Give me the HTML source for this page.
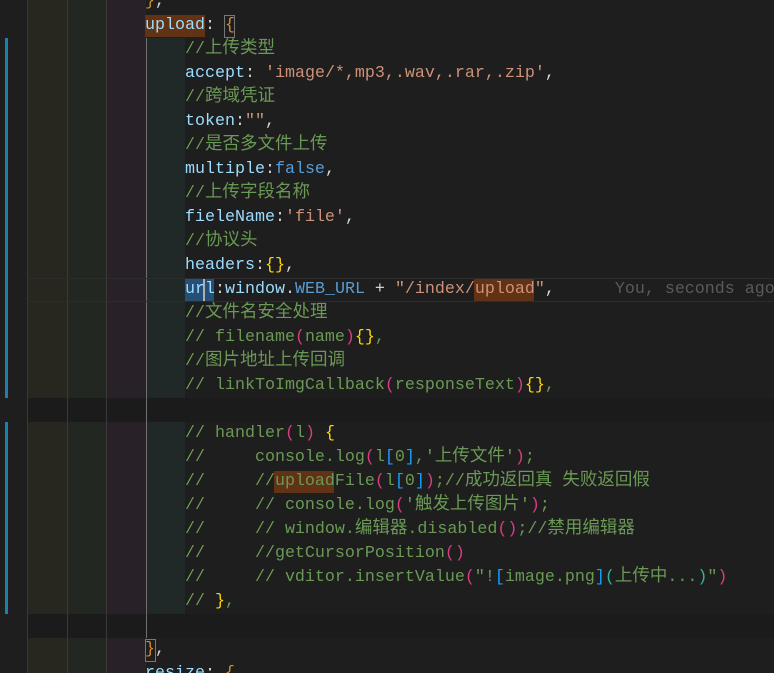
<!DOCTYPE html>
<html><head><meta charset="utf-8"><style>
html,body{margin:0;padding:0;width:774px;height:673px;overflow:hidden}
body{background:#1e1e1e;position:relative;font-family:"Liberation Mono","Noto Sans CJK SC",monospace;font-size:16.67px;color:#d4d4d4}
.a{position:absolute}
.ln{position:absolute;left:145px;height:24px;line-height:24px;white-space:pre}
.c{font-size:17.5px;line-height:20px}
.k{color:#9cdcfe}.s{color:#ce9178}.g{color:#6a9955}.b{color:#569cd6}.y{color:#ffd700}.p{color:#da3a7e}.q{color:#179fff}.t{color:#2fb39a}.o{color:#d98a2b}.w{color:#d4d4d4}
</style></head><body>
<div class="a" style="left:27px;top:0;width:40px;height:673px;background:#27271f"></div>
<div class="a" style="left:67px;top:0;width:39px;height:673px;background:#222821"></div>
<div class="a" style="left:106px;top:0;width:40px;height:673px;background:#282228"></div>
<div class="a" style="left:146px;top:38px;width:39px;height:360px;background:#212828"></div>
<div class="a" style="left:146px;top:422px;width:39px;height:192px;background:#212828"></div>
<div class="a" style="left:27px;top:398px;width:747px;height:24px;background:#1b1b1b"></div>
<div class="a" style="left:27px;top:614px;width:747px;height:24px;background:#1b1b1b"></div>
<div class="a" style="left:27px;top:0;width:1px;height:673px;background:#3a3a3a"></div>
<div class="a" style="left:67px;top:0;width:1px;height:673px;background:#3a3a3a"></div>
<div class="a" style="left:106px;top:0;width:1px;height:673px;background:#3a3a3a"></div>
<div class="a" style="left:146px;top:38px;width:1px;height:600px;background:#707070"></div>
<div class="a" style="left:5px;top:38px;width:3px;height:360px;background:#1b81a8"></div>
<div class="a" style="left:5px;top:422px;width:3px;height:192px;background:#1b81a8"></div>
<div class="a" style="left:27px;top:278px;width:747px;height:22px;border-top:1px solid #2c2c2c;border-bottom:1px solid #2c2c2c"></div>
<div class="a" style="left:185px;top:279px;width:29px;height:22px;background:#264f78"></div>
<div class="a" style="left:203px;top:279px;width:2px;height:22px;background:#aeafad"></div>
<div class="a" style="left:474px;top:279px;width:60px;height:22px;background:#613214"></div>
<div class="a" style="left:145px;top:15px;width:60px;height:22px;background:#613214"></div>
<div class="a" style="left:224px;top:15px;width:9px;height:21px;border:1px solid #777"></div>
<div class="a" style="left:145px;top:639px;width:9px;height:21px;border:1px solid #777"></div>
<div class="a" style="left:274px;top:471px;width:60px;height:22px;background:#613214"></div>

<div class="ln" style="top:-10px"><span class="o">}</span>,</div>
<div class="ln" style="top:14px"><span class="k">upload</span>: <span class="o">{</span></div>
<div class="ln" style="top:38px">    <span class="g">//<span class="c">上传类型</span></span></div>
<div class="ln" style="top:62px">    <span class="k">accept</span>: <span class="s">'image/*,mp3,.wav,.rar,.zip'</span>,</div>
<div class="ln" style="top:86px">    <span class="g">//<span class="c">跨域凭证</span></span></div>
<div class="ln" style="top:110px">    <span class="k">token</span>:<span class="s">""</span>,</div>
<div class="ln" style="top:134px">    <span class="g">//<span class="c">是否多文件上传</span></span></div>
<div class="ln" style="top:158px">    <span class="k">multiple</span>:<span class="b">false</span>,</div>
<div class="ln" style="top:182px">    <span class="g">//<span class="c">上传字段名称</span></span></div>
<div class="ln" style="top:206px">    <span class="k">fieleName</span>:<span class="s">'file'</span>,</div>
<div class="ln" style="top:230px">    <span class="g">//<span class="c">协议头</span></span></div>
<div class="ln" style="top:254px">    <span class="k">headers</span>:<span class="y">{}</span>,</div>
<div class="ln" style="top:278px">    <span class="k">url</span>:<span class="k">window</span>.<span class="b">WEB_URL</span> + <span class="s">"/index/upload"</span>,      <span style="color:#5a5a5a">You, seconds ago</span></div>
<div class="ln" style="top:302px">    <span class="g">//<span class="c">文件名安全处理</span></span></div>
<div class="ln" style="top:326px">    <span class="g">// filename<span class="p">(</span>name<span class="p">)</span><span class="y">{}</span>,</span></div>
<div class="ln" style="top:350px">    <span class="g">//<span class="c">图片地址上传回调</span></span></div>
<div class="ln" style="top:374px">    <span class="g">// linkToImgCallback<span class="p">(</span>responseText<span class="p">)</span><span class="y">{}</span>,</span></div>
<div class="ln" style="top:422px">    <span class="g">// handler<span class="p">(</span>l<span class="p">)</span> <span class="y">{</span></span></div>
<div class="ln" style="top:446px">    <span class="g">//     console.log<span class="p">(</span>l<span class="q">[</span>0<span class="q">]</span>,'<span class="c">上传文件</span>'<span class="p">)</span>;</span></div>
<div class="ln" style="top:470px">    <span class="g">//     //uploadFile<span class="p">(</span>l<span class="q">[</span>0<span class="q">]</span><span class="p">)</span>;//<span class="c">成功返回真</span> <span class="c">失败返回假</span></span></div>
<div class="ln" style="top:494px">    <span class="g">//     // console.log<span class="p">(</span>'<span class="c">触发上传图片</span>'<span class="p">)</span>;</span></div>
<div class="ln" style="top:518px">    <span class="g">//     // window.<span class="c">编辑器</span>.disabled<span class="p">()</span>;//<span class="c">禁用编辑器</span></span></div>
<div class="ln" style="top:542px">    <span class="g">//     //getCursorPosition<span class="p">()</span></span></div>
<div class="ln" style="top:566px">    <span class="g">//     // vditor.insertValue<span class="p">(</span>"!<span class="q">[</span>image.png<span class="q">]</span><span class="t">(</span><span class="c">上传中</span>...<span class="t">)</span>"<span class="p">)</span></span></div>
<div class="ln" style="top:590px">    <span class="g">// <span class="y">}</span>,</span></div>
<div class="ln" style="top:638px"><span class="o">}</span>,</div>
<div class="ln" style="top:662px"><span class="k">resize</span>: <span class="o">{</span></div>
</body></html>
